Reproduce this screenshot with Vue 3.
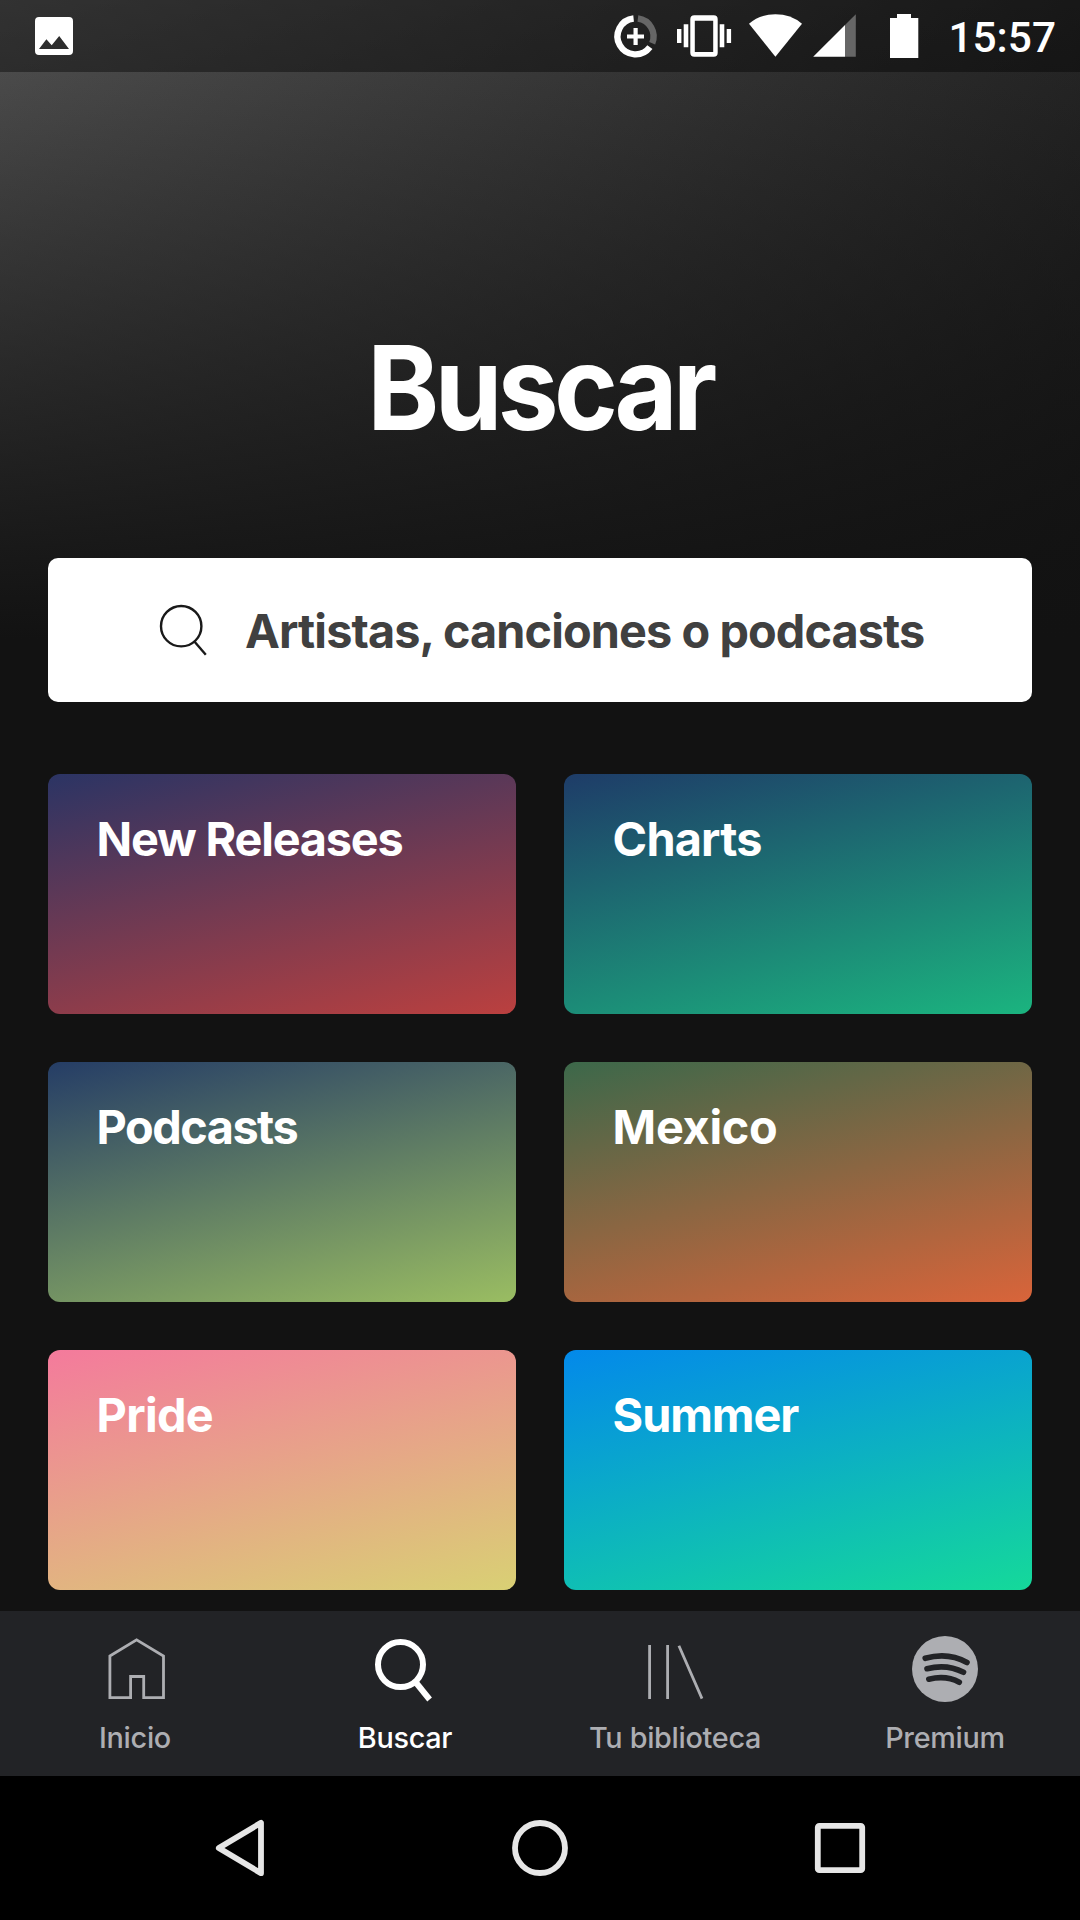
<script setup>
const cards = [
  { title: 'New Releases', from: '#2b3464', to: '#bb403f', spacing: '-1.2px' },
  { title: 'Charts', from: '#1e3c68', to: '#1bb47f', spacing: '-0.8px' },
  { title: 'Podcasts', from: '#253d66', to: '#9abd62', spacing: '-1.5px' },
  { title: 'Mexico', from: '#3c684a', to: '#d9643a', spacing: '-0.3px' },
  { title: 'Pride', from: '#f47a9c', to: '#d9d074', spacing: '-0.7px' },
  { title: 'Summer', from: '#0389ea', to: '#15d99a', spacing: '-1.1px' },
]
const tabs = [
  { id: 'home', label: 'Inicio' },
  { id: 'search', label: 'Buscar' },
  { id: 'library', label: 'Tu biblioteca' },
  { id: 'premium', label: 'Premium' },
]
</script>

<template>
  <div class="screen">
    <header class="status">
      <svg class="photo" width="38" height="38" viewBox="0 0 38 38">
        <path fill="#fff" fill-rule="evenodd" d="M4 0H34Q38 0 38 4V34Q38 38 34 38H4Q0 38 0 34V4Q0 0 4 0ZM4 32H34L24.2 19L16.7 28.2L11.4 22.3Z" />
      </svg>
      <svg class="indicators" width="310" height="72" viewBox="610 0 310 72">
        <g fill="none" stroke-width="6.4">
          <path stroke="#666" d="M637.9 18.5A18 18 0 0 1 652.2 43.2" />
          <path stroke="#fff" d="M633.6 18.5A18 18 0 1 0 649.9 47.2" />
        </g>
        <path stroke="#fff" stroke-width="4.2" d="M627 36.5H644M635.6 28V45" />
        <path fill="#fff" fill-rule="evenodd" d="M694.3 15.3H713.7Q717.7 15.3 717.7 19.3V52.7Q717.7 56.7 713.7 56.7H694.3Q690.3 56.7 690.3 52.7V19.3Q690.3 15.3 694.3 15.3ZM694.8 20.8V52H713.2V20.8Z" />
        <path fill="#fff" d="M683.7 24.3h4.6v23h-4.6zM677 29h4.4v14h-4.4zM719.7 24.3h4.6v23h-4.6zM726.7 29h4.4v14h-4.4z" />
        <path fill="#fff" d="M775.4 56.7L749 23.7Q760 14.3 775.4 14.3T802 23.7Z" />
        <path fill="#666" d="M855.8 14.3V56.8H845V25.1Z" />
        <path fill="#fff" d="M845 25.1V56.8H813.2Z" />
        <path fill="#fff" d="M890 18H897V14H911V18H918.3V58H890Z" />
      </svg>
      <time class="clock">15:57</time>
    </header>

    <main class="content">
      <h1 class="title">Buscar</h1>
      <div class="searchbox">
        <svg width="50" height="54" viewBox="158 603 50 54" fill="none" stroke="#191919" stroke-width="2.4">
          <circle cx="181.2" cy="626.2" r="20.2" />
          <path d="M194.6 641.8L205.8 654.8" />
        </svg>
        <span class="hint">Artistas, canciones o podcasts</span>
      </div>
      <section class="grid">
        <article
          v-for="c in cards"
          :key="c.title"
          class="card"
          :style="{ backgroundImage: `linear-gradient(166deg, ${c.from}, ${c.to})` }"
        >
          <h2 :style="{ letterSpacing: c.spacing }">{{ c.title }}</h2>
        </article>
      </section>
    </main>

    <nav class="tabs">
      <a v-for="t in tabs" :key="t.id" class="tab" :class="{ active: t.id === 'search' }">
        <svg width="80" height="80" viewBox="0 0 80 80" fill="none" stroke="currentColor">
          <path v-if="t.id === 'home'" stroke-width="2.8" d="M14.9 26L41.6 9.9L68.5 26V67.6H48.7V46.5H35.6V67.6H14.9Z" />
          <g v-else-if="t.id === 'search'" stroke-width="6">
            <circle cx="35.5" cy="34.6" r="22.5" />
            <path d="M50.5 52L64.6 69.5" />
          </g>
          <g v-else-if="t.id === 'library'" stroke-width="2.8">
            <path d="M14.6 15V69M32.6 15V69M43.9 15.8L67 68.6" />
          </g>
          <g v-else>
            <circle cx="40" cy="39" r="33" fill="currentColor" stroke="none" />
            <g stroke="#222326" stroke-width="5.6" stroke-linecap="round">
              <path d="M20.2 28.3Q43 21.8 62 32.5" />
              <path d="M22 38.7Q42 33.7 58.5 42.3" />
              <path d="M23.8 49.2Q41 45 54.3 52.2" />
            </g>
          </g>
        </svg>
        <span>{{ t.label }}</span>
      </a>
    </nav>

    <footer class="system">
      <svg width="60" height="60" viewBox="210 1818 60 60"><path d="M261 1822.8V1873.2L218.8 1848Z" /></svg>
      <svg width="60" height="60" viewBox="510 1818 60 60"><circle cx="540" cy="1848" r="25" /></svg>
      <svg width="60" height="60" viewBox="810 1818 60 60"><rect x="817.8" y="1825.8" width="44.4" height="44.4" rx="1.5" /></svg>
    </footer>
  </div>
</template>

<style>
body { margin: 0; background: #121212; }
</style>

<style scoped>
.screen {
  display: flex;
  flex-direction: column;
  width: 1080px;
  height: 1920px;
  overflow: hidden;
  color: #fff;
  font-family: Inter, "Liberation Sans", sans-serif;
  background-color: #121212;
  background-image:
    linear-gradient(to bottom, rgba(18, 18, 18, 0), #121212),
    linear-gradient(128deg, #545454, #121212 1290px);
  background-size: 100% 640px;
  background-repeat: no-repeat;
}
svg { display: block; flex: none; }
.status {
  display: flex;
  align-items: center;
  height: 72px;
  padding: 0 24px 0 35px;
  box-sizing: border-box;
  background: rgba(0, 0, 0, .4);
}
.indicators { margin-left: auto; }
.clock {
  width: 136px;
  text-align: right;
  font: 500 42.4px/72px Roboto, sans-serif;
  padding-top: 3px;
}
.content {
  display: flex;
  flex-direction: column;
  height: 1539px;
  padding: 0 48px;
}
.title {
  margin: 243px 0 0;
  height: 146px;
  text-align: center;
  font-size: 117px;
  font-weight: 700;
  line-height: 146px;
  letter-spacing: -5px;
  transform: scaleX(.93);
}
.searchbox {
  display: flex;
  align-items: center;
  gap: 37px;
  height: 144px;
  margin: 97px 0 72px;
  padding-left: 110px;
  border-radius: 10px;
  background: #fff;
}
.hint {
  padding-top: 1px;
  color: #404040;
  font-size: 46.8px;
  font-weight: 700;
  line-height: 60px;
  letter-spacing: -.9px;
  white-space: nowrap;
}
.grid {
  display: grid;
  grid-template-columns: 468px 468px;
  grid-auto-rows: 240px;
  gap: 48px;
}
.card { border-radius: 12px; padding: 35px 48px 0 48.6px; box-sizing: border-box; }
.card h2 {
  margin: 0;
  font-size: 46.8px;
  font-weight: 700;
  line-height: 60px;
  white-space: nowrap;
}
.tabs {
  display: flex;
  height: 165px;
  background: #222326;
}
.tab {
  width: 270px;
  display: flex;
  flex-direction: column;
  align-items: center;
  padding-top: 19px;
  color: #adaeb2;
  font-size: 28.8px;
  font-weight: 450;
  letter-spacing: -.3px;
  line-height: 36px;
}
.tab svg { margin-bottom: 10px; }
.active { color: #fff; font-weight: 500; }
.system {
  display: flex;
  justify-content: space-between;
  align-items: center;
  height: 144px;
  padding: 0 210px;
  background: #000;
}
.system svg { fill: none; stroke: #e6e6e6; stroke-width: 5.8; stroke-linejoin: round; }
</style>
